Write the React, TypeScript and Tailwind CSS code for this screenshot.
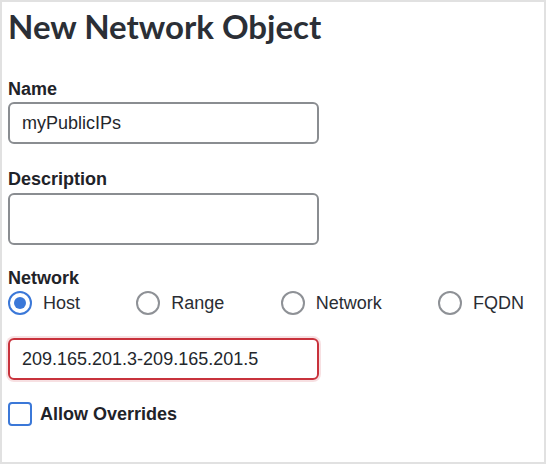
import React from "react";

const sans = { fontFamily: '"Liberation Sans", Arial, sans-serif' };

function Radio({ label, checked }: { label: string; checked?: boolean }) {
  return (
    <div className="flex items-center gap-[11px]">
      <span
        className={
          checked
            ? "w-[24px] h-[24px] rounded-full border-2 border-[#3b78d8] flex items-center justify-center"
            : "w-[24px] h-[24px] rounded-full border-2 border-[#8e9196] flex items-center justify-center"
        }
      >
        {checked && <span className="w-[12px] h-[12px] rounded-full bg-[#3b78d8]" />}
      </span>
      <span className="text-[18px] text-[#2a2d33] leading-[22px]">{label}</span>
    </div>
  );
}

export default function App() {
  return (
    <div
      className="w-[546px] h-[464px] border-2 border-[#e1e1e1] bg-white pl-[6px] pt-[4px] box-border"
      style={sans}
    >
      <h1
        className="text-[33px] leading-[40px] font-bold text-[#2b2f36]"
        style={{ fontFamily: 'Lato, "Open Sans", sans-serif' }}
      >
        New Network Object
      </h1>

      <div className="mt-[32px] text-[18px] leading-[22px] font-bold text-[#1f2329]">Name</div>
      <div className="mt-[2px] w-[311px] h-[42px] border-2 border-[#8a8d91] rounded-[6px] px-[12px] flex items-center text-[18px] text-[#24272c]">
        myPublicIPs
      </div>

      <div className="mt-[24px] text-[18px] leading-[22px] font-bold text-[#1f2329]">Description</div>
      <div className="mt-[3px] w-[311px] h-[52px] border-2 border-[#8a8d91] rounded-[6px]" />

      <div className="mt-[22px] text-[18px] leading-[22px] font-bold text-[#1f2329]">Network</div>
      <div className="mt-[2px] w-[516px] flex justify-between">
        <Radio label="Host" checked />
        <Radio label="Range" />
        <Radio label="Network" />
        <Radio label="FQDN" />
      </div>

      <div className="mt-[23px] w-[311px] h-[42px] border-2 border-[#c8323c] rounded-[6px] px-[12px] flex items-center text-[18px] text-[#24272c] shadow-[0_0_0_2px_rgba(200,50,60,0.15)]">
        209.165.201.3-209.165.201.5
      </div>

      <div className="mt-[22px] flex items-center gap-[8px]">
        <span className="w-[24px] h-[24px] rounded-[4px] border-2 border-[#3b78d8]" />
        <span className="text-[18px] leading-[22px] font-bold text-[#1f2329]">Allow Overrides</span>
      </div>
    </div>
  );
}
